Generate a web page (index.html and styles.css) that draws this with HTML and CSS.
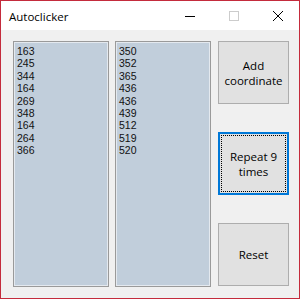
FILE: index.html
```html
<!DOCTYPE html>
<html>
<head>
    <title>Autoclicker</title>
    <link rel="stylesheet" href="styles.css">
</head>
<body>
    <div class="window">
        <div class="titlebar">
            <span class="title">Autoclicker</span>
            <div class="controls">
                <span class="ctl"><svg width="10" height="10" viewBox="0 0 10 10"><path d="M0 5.5h10" stroke="#000" stroke-width="1"/></svg></span>
                <span class="ctl"><svg width="10" height="10" viewBox="0 0 10 10"><rect x="0.5" y="0.5" width="9" height="9" fill="none" stroke="#ccc" stroke-width="1"/></svg></span>
                <span class="ctl"><svg width="10" height="10" viewBox="0 0 10 10"><path d="M0 0L10 10M10 0L0 10" stroke="#000" stroke-width="1"/></svg></span>
            </div>
        </div>
        <div class="client">
            <ul class="listbox">
                <li>163</li><li>245</li><li>344</li><li>164</li><li>269</li>
                <li>348</li><li>164</li><li>264</li><li>366</li>
            </ul>
            <ul class="listbox">
                <li>350</li><li>352</li><li>365</li><li>436</li><li>436</li>
                <li>439</li><li>512</li><li>519</li><li>520</li>
            </ul>
            <div class="buttons">
                <button class="btn">Add<br>coordinate</button>
                <button class="btn focused">Repeat 9<br>times</button>
                <button class="btn">Reset</button>
            </div>
        </div>
    </div>
</body>
</html>
```

FILE: styles.css
```css
body { margin: 0; font-family: "Liberation Sans", Arial, sans-serif; }
.window { width: 300px; height: 299px; box-sizing: border-box; border: 1px solid #c42b3c; background: #f0f0f0; display: flex; flex-direction: column; }
.titlebar { height: 29px; background: #fff; display: flex; align-items: center; justify-content: space-between; }
.title { font-family: "Open Sans", sans-serif; font-size: 11.5px; color: #000; padding-left: 8px; padding-top: 1px; }
.controls { display: flex; margin-right: -1px; }
.ctl { width: 44px; height: 29px; display: flex; align-items: center; justify-content: center; }
.client { flex: 1; display: flex; padding: 11px 10px 0 12px; gap: 6px; }
.listbox { list-style: none; margin: 0; padding: 3px 0 0 3px; width: 96px; height: 246px; box-sizing: border-box; background: #c1cedb; border: 1px solid #9a9a9a; box-shadow: inset 1px 1px 0 #e4e9ef, inset -1px -1px 0 #e4e9ef; font-size: 10.5px; line-height: 12.4px; color: #111; }
.buttons { display: flex; flex-direction: column; justify-content: space-between; margin-left: 1px; width: 71px; height: 245px; }
.btn { height: 63px; width: 71px; background: #e1e1e1; border: 1px solid #adadad; font-family: "Open Sans", sans-serif; font-size: 11.5px; line-height: 15px; color: #000; padding: 0; }
.focused { border-color: #0078d7; box-shadow: inset 0 0 0 1px #0078d7; outline: 1px dotted #000; outline-offset: -4px; }
```
